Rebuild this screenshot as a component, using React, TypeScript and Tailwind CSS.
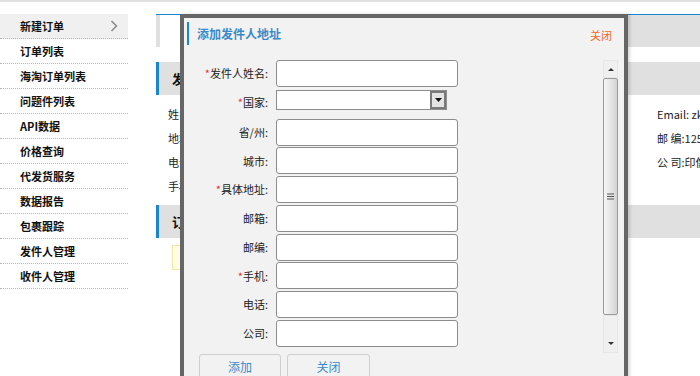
const menu = [
  "新建订单",
  "订单列表",
  "海淘订单列表",
  "问题件列表",
  "API数据",
  "价格查询",
  "代发货服务",
  "数据报告",
  "包裹跟踪",
  "发件人管理",
  "收件人管理",
];

const fields = [
  { label: "省/州", req: false },
  { label: "城市", req: false },
  { label: "具体地址", req: true },
  { label: "邮箱", req: false },
  { label: "邮编", req: false },
  { label: "手机", req: true },
  { label: "电话", req: false },
  { label: "公司", req: false },
];

const font = { fontFamily: '"Noto Sans CJK SC", "Liberation Sans", sans-serif' };

const Label = ({ text, req }: { text: string; req?: boolean }) => (
  <div className="w-[84px] shrink-0 text-right text-[11px] text-[#222]">
    {req && <span className="text-[#e33]">*</span>}
    {text}:
  </div>
);

const App = () => {
  return (
    <div className="relative w-[700px] h-[376px] overflow-hidden bg-white" style={font}>
      <div className="h-[2px] bg-[#e2e2e2]" />
      <div className="flex pt-[12px]">
        {/* sidebar */}
        <div className="w-[128px] shrink-0">
          {menu.map((m, i) => (
            <div
              key={m}
              className={`flex h-[25px] items-center justify-between border-b border-dotted border-[#b5b5b5] pl-[20px] pr-[10px] text-[11px] font-bold text-[#111] ${
                i === 0 ? "h-[24px] bg-[#f0f0f0]" : ""
              }`}
            >
              <span>{m}</span>
              {i === 0 && (
                <svg width="8" height="12" viewBox="0 0 8 12">
                  <path d="M1.5 1 L6.5 6 L1.5 11" stroke="#888" strokeWidth="1.5" fill="none" />
                </svg>
              )}
            </div>
          ))}
        </div>

        {/* main content behind the dialog */}
        <div className="ml-[28px] flex-1">
          <div className="flex h-[33px] border-t border-[#1a86d0] bg-[#e0e0e0]">
            <div className="ml-[4px] w-[30px] bg-white" />
          </div>
          <div className="mt-[15px] flex h-[33px] items-center border-l-[3px] border-[#1a86d0] bg-[#e0e0e0] pl-[13px] text-[13px] font-bold text-[#111]">
            发件人信息
          </div>
          <div className="relative flex flex-col gap-[7px] pt-[11px] pl-[12px] text-[11px] text-[#222]">
            <div className="h-[17px]">姓名:</div>
            <div className="h-[17px]">地址:</div>
            <div className="h-[17px]">电话:</div>
            <div className="h-[17px]">手机:</div>
            <div className="absolute top-[11px] left-[501px] flex flex-col gap-[7px]">
              <div className="h-[17px] whitespace-nowrap">Email: zk.li@163.com</div>
              <div className="h-[17px] whitespace-nowrap">邮 编:125100</div>
              <div className="h-[17px] whitespace-nowrap">公 司:印像科技</div>
            </div>
          </div>
          <div className="mt-[10px] flex h-[33px] items-center border-l-[3px] border-[#1a86d0] bg-[#e0e0e0] pl-[13px] text-[13px] font-bold text-[#111]">
            订单信息
          </div>
          <div className="ml-[16px] mt-[7px] h-[25px] w-[300px] border border-[#f0e6a8] bg-[#fffde3]" />
        </div>
      </div>

      {/* dialog */}
      <div className="absolute left-[180px] top-[14px] flex h-[380px] w-[448px] flex-col border-4 border-b-0 border-[#666] bg-[#f2f2f2] shadow-[2px_0_3px_rgba(0,0,0,0.15)]">
        <div className="flex h-[42px] shrink-0 items-start justify-between pt-[4px] pl-[3px] pr-[12px]">
          <div className="flex h-[23px] items-center border-l-2 border-[#1a86d0] pl-[8px] text-[12px] font-bold text-[#3a8ac9]">
            添加发件人地址
          </div>
          <div className="mt-[5px] text-[11px] text-[#f26a25]">关闭</div>
        </div>

        <div className="flex h-[293px] shrink-0">
          <div className="flex flex-1 flex-col gap-[1.75px]">
            <div className="flex h-[27px] items-center gap-[8px]">
              <Label text="发件人姓名" req />
              <div className="h-[27px] w-[182px] rounded-[3px] border border-[#8c8c8c] bg-white" />
            </div>
            <div className="flex h-[28px] items-start gap-[8px] pt-[1px]">
              <div className="mt-[4px]">
                <Label text="国家" req />
              </div>
              <div className="flex h-[20px] w-[171px] border border-[#8c8c8c] bg-white">
                <div className="flex-1" />
                <div className="flex w-[16px] items-center justify-center border-2 border-[#7a7a7a] bg-[#e4e4e4]">
                  <svg width="7" height="4" viewBox="0 0 7 4">
                    <path d="M0 0 H7 L3.5 4 Z" fill="#111" />
                  </svg>
                </div>
              </div>
            </div>
            {fields.map((f) => (
              <div key={f.label} className="flex h-[27px] items-center gap-[8px]">
                <Label text={f.label} req={f.req} />
                <div className="h-[27px] w-[182px] rounded-[3px] border border-[#8c8c8c] bg-white" />
              </div>
            ))}
          </div>

          {/* scrollbar */}
          <div className="mr-[6px] flex w-[15px] flex-col">
            <div className="flex h-[18px] items-center justify-center border border-[#e6e6e6] bg-[#f0f0f0]">
              <svg width="6" height="3" viewBox="0 0 6 3">
                <path d="M0 3 H6 L3 0 Z" fill="#333" />
              </svg>
            </div>
            <div className="flex h-[237px] items-center justify-center rounded-[2px] border border-[#9a9a9a] bg-gradient-to-r from-[#f4f4f4] via-[#e6e6e6] to-[#d4d4d4]">
              <svg width="7" height="7" viewBox="0 0 7 7">
                <path d="M0 1 H7 M0 3.5 H7 M0 6 H7" stroke="#555" strokeWidth="1" />
              </svg>
            </div>
            <div className="flex flex-1 items-end justify-center border border-[#e6e6e6] bg-[#f0f0f0] pb-[7px]">
              <svg width="6" height="3" viewBox="0 0 6 3">
                <path d="M0 0 H6 L3 3 Z" fill="#333" />
              </svg>
            </div>
          </div>
        </div>

        <div className="flex gap-[6px] pl-[15px] pt-[1px]">
          <div className="flex h-[26px] w-[82px] items-center justify-center rounded-[3px] border border-[#cfcfcf] bg-[#f2f2f2] text-[12px] text-[#3a8ac9]">
            添加
          </div>
          <div className="flex h-[26px] w-[83px] items-center justify-center rounded-[3px] border border-[#cfcfcf] bg-[#f2f2f2] text-[12px] text-[#3a8ac9]">
            关闭
          </div>
        </div>
      </div>
    </div>
  );
};

export default App;
